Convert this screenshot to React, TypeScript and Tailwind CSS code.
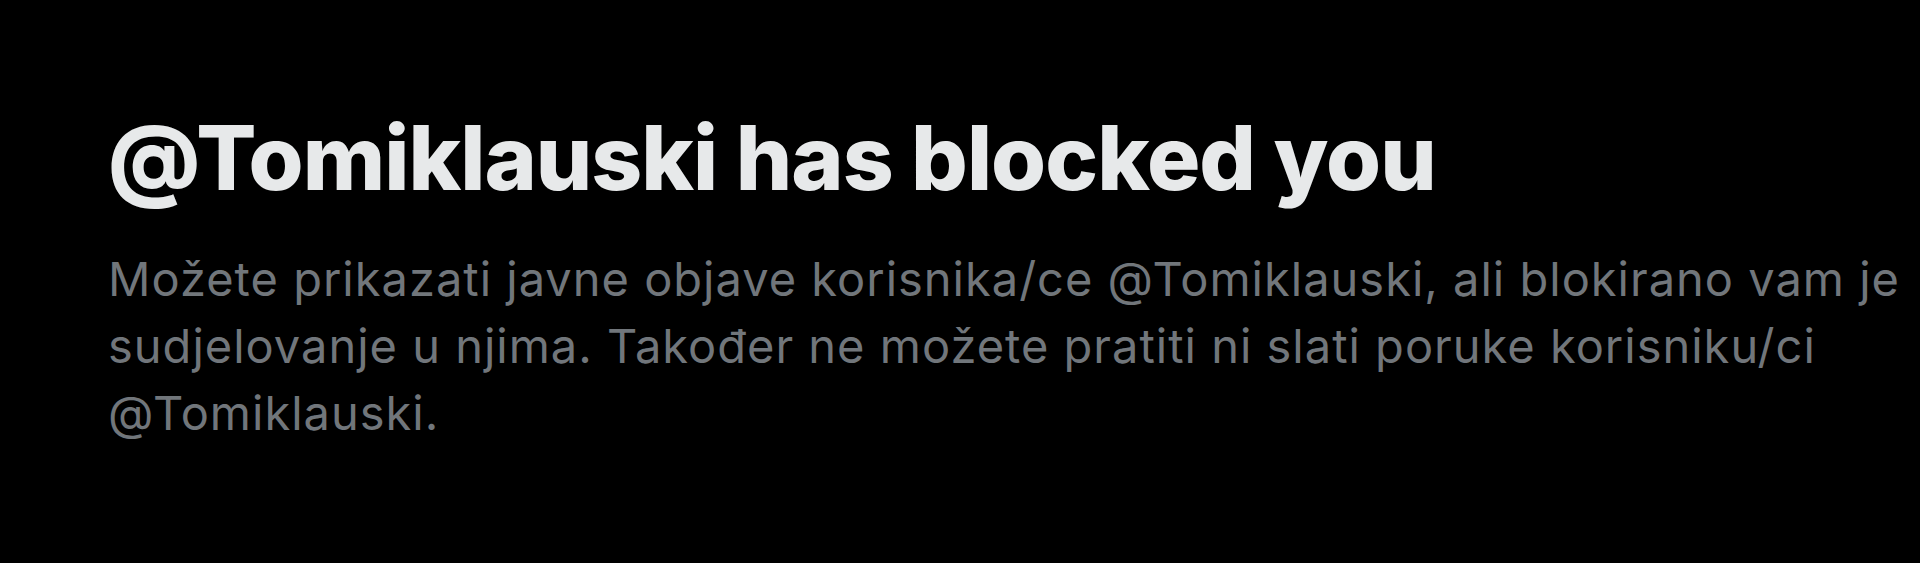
export default function App() {
  return (
    <div className="w-[1920px] h-[563px] bg-black overflow-hidden">
      <div className="pl-[108px] pt-[103px] w-[1920px]" style={{ fontFamily: "Inter, 'Noto Sans', sans-serif" }}>
        <h1 className="text-[89px] leading-[110px] font-extrabold text-[#e7e9ea] tracking-[-1px]">
          @Tomiklauski has blocked you
        </h1>
        <p className="mt-[32px] w-[1808px] text-[47px] leading-[67px] tracking-[1px] text-[#71767b]">
          Možete prikazati javne objave korisnika/ce @Tomiklauski, ali blokirano vam je sudjelovanje u njima. Također ne možete pratiti ni slati poruke korisniku/ci @Tomiklauski.
        </p>
      </div>
    </div>
  );
}
